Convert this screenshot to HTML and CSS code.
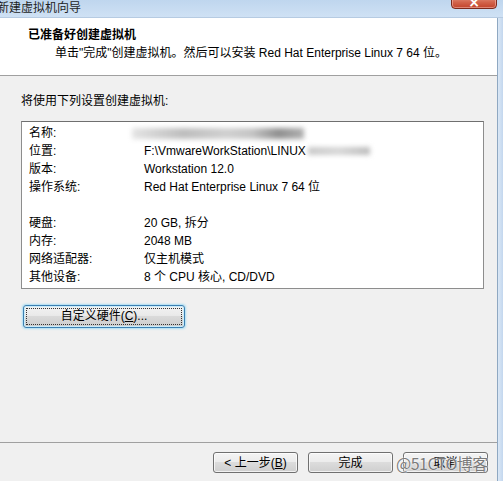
FILE: index.html
```html
<!DOCTYPE html>
<html>
<head>
<meta charset="utf-8">
<link rel="stylesheet" href="styles.css">
</head>
<body>
<div class="window">
  <div class="titlebar">
    <span class="title">新建虚拟机向导</span>
    <div class="close"><span class="x">×</span></div>
  </div>
  <div class="main">
    <div class="dialog">
      <div class="header">
        <div class="heading">已准备好创建虚拟机</div>
        <div class="sub">单击"完成"创建虚拟机。然后可以安装 Red Hat Enterprise Linux 7 64 位。</div>
      </div>
      <div class="body">
        <div class="intro">将使用下列设置创建虚拟机:</div>
        <div class="listbox">
          <div class="row"><span class="k">名称:</span><span class="v"><span class="blur blur-name"></span></span></div>
          <div class="row"><span class="k">位置:</span><span class="v">F:\VmwareWorkStation\LINUX<span class="blur blur-loc"></span></span></div>
          <div class="row"><span class="k">版本:</span><span class="v">Workstation 12.0</span></div>
          <div class="row"><span class="k">操作系统:</span><span class="v">Red Hat Enterprise Linux 7 64 位</span></div>
          <div class="row"></div>
          <div class="row"><span class="k">硬盘:</span><span class="v">20 GB, 拆分</span></div>
          <div class="row"><span class="k">内存:</span><span class="v">2048 MB</span></div>
          <div class="row"><span class="k">网络适配器:</span><span class="v">仅主机模式</span></div>
          <div class="row"><span class="k">其他设备:</span><span class="v">8 个 CPU 核心, CD/DVD</span></div>
        </div>
        <div class="custom-wrap">
          <button class="btn custom"><span class="focus">自定义硬件(<u>C</u>)...</span></button>
        </div>
      </div>
      <div class="footer">
        <button class="btn">&lt; 上一步(<u>B</u>)</button>
        <button class="btn">完成</button>
        <button class="btn">取消</button>
        <span class="watermark">@51CTO博客</span>
      </div>
    </div>
    <div class="frame"></div>
  </div>
</div>
</body>
</html>
```
FILE: styles.css
```css
* { box-sizing: border-box; }
html, body { margin: 0; padding: 0; }
body {
  width: 503px;
  height: 481px;
  overflow: hidden;
  font-family: "Liberation Sans", "Noto Sans CJK SC", sans-serif;
  font-size: 12px;
  color: #000;
  background: #f0f0f0;
}
.window {
  display: flex;
  flex-direction: column;
  height: 481px;
}
.titlebar {
  position: relative;
  height: 18px;
  background: linear-gradient(#bfd6ee, #cfe1f4);
  border-bottom: 1px solid #b6cbe2;
  flex: none;
}
.title {
  display: block;
  margin-left: -3px;
  line-height: 13px;
  color: #1e1e1e;
  font-family: "Noto Sans CJK SC", sans-serif;
}
.close {
  position: absolute;
  left: 451px;
  top: -6px;
  width: 46px;
  height: 15px;
  border: 1px solid #7d2a1d;
  border-radius: 4px;
  background: linear-gradient(#e6a191, #d3644c 55%, #c2432b);
  box-shadow: inset 0 0 0 1px rgba(255,200,190,0.5);
  text-align: center;
}
.close .x {
  display: block;
  color: #fff;
  font-family: "DejaVu Sans", sans-serif;
  font-weight: bold;
  font-size: 14px;
  line-height: 14px;
}
.main {
  flex: 1;
  display: flex;
}
.dialog {
  width: 497px;
  display: flex;
  flex-direction: column;
  position: relative;
}
.frame {
  width: 6px;
  border-left: 1px solid #8fa8c2;
  background: linear-gradient(90deg, #dbe8f6, #c3d7ee);
}
.header {
  height: 58px;
  background: #fff;
  border-bottom: 1px solid #a0a0a0;
  padding-top: 8px;
  flex: none;
}
.heading {
  font-weight: bold;
  line-height: 18px;
  padding-left: 28px;
}
.sub {
  line-height: 18px;
  padding-left: 55px;
}
.body {
  flex: 1;
  padding: 16px 0 0 21px;
}
.intro {
  line-height: 18px;
}
.listbox {
  margin-top: 11px;
  width: 463px;
  height: 168px;
  background: #fff;
  border: 1px solid #8d8d8d;
  border-top-color: #6f6f6f;
  padding: 2px 0 0 7px;
}
.row {
  display: flex;
  height: 18px;
  line-height: 18px;
}
.k { width: 115px; flex: none; }
.v { display: flex; align-items: center; }
.blur {
  display: inline-block;
  height: 11px;
  filter: blur(2.5px);
}
.blur-name {
  margin-left: -12px;
  width: 172px;
  background: linear-gradient(90deg, #e4e4e4, #bdbdbd 30%, #d0d0d0 55%, #c4c4c4 70%, #8f8f8f 85%, #b0b0b0);
}
.blur-loc {
  margin-left: 2px;
  width: 62px;
  height: 8px;
  background: linear-gradient(90deg, #c8c8c8, #d6d6d6 50%, #bbbbbb);
}
.custom-wrap {
  margin-top: 16px;
  padding-left: 2px;
}
.btn {
  font: inherit;
  color: #000;
  height: 21px;
  width: 85px;
  border: 1px solid #707070;
  border-radius: 3px;
  background: linear-gradient(#f4f4f4, #ececec 45%, #dcdcdc 50%, #cfcfcf);
  box-shadow: inset 0 0 0 1px rgba(255,255,255,0.7);
  padding: 0;
  line-height: 18px;
}
.btn.custom {
  width: 162px;
  height: 23px;
  border-color: #3c7fb1;
  box-shadow: 0 0 2px 1px #a8def4, inset 0 0 0 1px #c8ecfb;
  background: linear-gradient(#f2f2f2, #eaeaea 45%, #dadada 50%, #cccccc);
  padding: 2px;
}
.focus {
  display: block;
  height: 17px;
  border: 1px dotted #333;
  line-height: 15px;
}
.footer {
  flex: none;
  height: 39px;
  border-top: 1px solid #a0a0a0;
  display: flex;
  justify-content: flex-end;
  gap: 10px;
  padding: 9px 9px 0 0;
  position: relative;
}
.watermark {
  position: absolute;
  left: 396px;
  top: 10px;
  font-family: "Noto Sans CJK SC", sans-serif;
  font-size: 16px;
  line-height: 20px;
  color: #7a7a7a;
  text-shadow: 0 0 2px #fff, 0 0 1px #fff;
  letter-spacing: -0.5px;
}
```
